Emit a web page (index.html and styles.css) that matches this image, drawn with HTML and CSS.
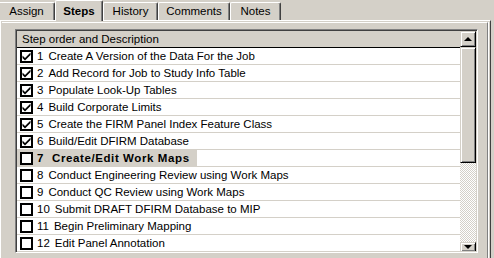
FILE: index.html
```html
<!DOCTYPE html>
<html lang="en">

<head>
    <meta charset="UTF-8" />
    <title>Job Steps</title>
    <link rel="stylesheet" href="styles.css">
</head>

<body>
    <div class="tabs">
        <div class="tab tab-assign">Assign</div>
        <div class="tab tab-steps active">Steps</div>
        <div class="tab tab-history">History</div>
        <div class="tab tab-comments">Comments</div>
        <div class="tab tab-notes">Notes</div>
    </div>

    <div class="panel">
        <div class="frame">
            <div class="list">
                <div class="grid">
                    <div class="grid-header">Step order and Description</div>
                    <div id="rows"></div>
                </div>
                <div class="scrollbar">
                    <div class="sb-btn sb-up"><span class="arrow-up"></span></div>
                    <div class="sb-thumb"></div>
                    <div class="sb-track"></div>
                    <div class="sb-btn sb-down"><span class="arrow-down"></span></div>
                </div>
            </div>
        </div>
    </div>

    <script>
        const steps = [
            { n: 1, text: "Create A Version of the Data For the Job", done: true },
            { n: 2, text: "Add Record for Job to Study Info Table", done: true },
            { n: 3, text: "Populate Look-Up Tables", done: true },
            { n: 4, text: "Build Corporate Limits", done: true },
            { n: 5, text: "Create the FIRM Panel Index Feature Class", done: true },
            { n: 6, text: "Build/Edit DFIRM Database", done: true },
            { n: 7, text: "Create/Edit Work Maps", done: false, current: true },
            { n: 8, text: "Conduct Engineering Review using Work Maps", done: false },
            { n: 9, text: "Conduct QC Review using Work Maps", done: false },
            { n: 10, text: "Submit DRAFT DFIRM Database to MIP", done: false },
            { n: 11, text: "Begin Preliminary Mapping", done: false },
            { n: 12, text: "Edit Panel Annotation", done: false }
        ];

        const checkSvg = '<svg width="9" height="9" viewBox="0 0 9 9"><path d="M0.5 3.5 L3 6 L8.5 0.5 L8.5 3 L3 8.5 L0.5 6 Z" fill="#000"/></svg>';

        const rows = document.getElementById("rows");
        steps.forEach((step) => {
            const row = document.createElement("div");
            row.className = "row";
            row.innerHTML = `
              <span class="cell${step.current ? " current" : ""}">
                <span class="check">${step.done ? checkSvg : ""}</span>
                <span class="num">${step.n}</span>
                <span class="desc">${step.text}</span>
              </span>`;
            rows.appendChild(row);
        });
    </script>
</body>

</html>
```

FILE: styles.css
```css
html,
body {
    margin: 0;
    width: 494px;
    height: 258px;
    overflow: hidden;
    background-color: #d4d0c8;
    font-family: "Liberation Sans", Arial, sans-serif;
    font-size: 11px;
    color: #000;
}

/* tab strip */
.tabs {
    display: flex;
    height: 20px;
    align-items: flex-end;
    margin-left: -2px;
}

.tab {
    height: 18px;
    line-height: 16px;
    border-top: 1px solid #fff;
    border-left: 1px solid #fff;
    border-right: 1px solid #404040;
    box-shadow: inset -1px 0 0 #808080;
    border-radius: 2px 2px 0 0;
    text-align: center;
    box-sizing: border-box;
    font-size: 11.5px;
}

.tab-assign { width: 57px; }
.tab-steps { width: 48px; }
.tab-history { width: 55px; }
.tab-comments { width: 72px; }
.tab-notes { width: 51px; }

.tab.active {
    height: 21px;
    margin-bottom: -1px;
    position: relative;
    z-index: 1;
    font-weight: bold;
    line-height: 21px;
    background-color: #d4d0c8;
}

/* panel under the tabs */
.panel {
    height: 238px;
    border-top: 1px solid #fff;
    border-left: 1px solid #fff;
    border-right: 1px solid #404040;
    width: 491px;
    box-sizing: border-box;
    padding: 1px 2px 0 1px;
}

.frame {
    height: 100%;
    border-top: 1px solid #fff;
    border-right: 1px solid #808080;
    box-shadow: 1px 0 0 #fff;
    box-sizing: border-box;
    padding: 6px 8px 0 13px;
}

/* list box */
.list {
    display: flex;
    width: 463px;
    height: 224px;
    box-sizing: border-box;
    border-top: 1px solid #808080;
    border-left: 1px solid #808080;
    border-right: 1px solid #fff;
    border-bottom: 1px solid #fff;
    box-shadow: inset 1px 1px 0 #404040, inset -1px -1px 0 #d4d0c8;
    padding: 1px;
}

.grid {
    flex: 1;
    background-color: #fff;
    overflow: hidden;
    font-size: 11.5px;
}

.grid-header {
    height: 16px;
    line-height: 16px;
    padding-left: 5px;
    background-color: #d4d0c8;
    border-bottom: 1px solid #000;
}

.row {
    height: 17px;
    border-bottom: 1px solid #d4d0c8;
    box-sizing: border-box;
    display: flex;
    align-items: center;
}

.cell {
    display: flex;
    align-items: center;
    height: 16px;
    padding-left: 3px;
    padding-right: 7px;
}

.cell.current {
    background-color: #d4d0c8;
    font-weight: bold;
    letter-spacing: 0.6px;
}

.check {
    width: 13px;
    height: 13px;
    box-sizing: border-box;
    border: 2px solid #000;
    background-color: #fff;
    display: flex;
    align-items: center;
    justify-content: center;
}

.check svg {
    display: block;
}

.num {
    margin-left: 4px;
}

.desc {
    margin-left: 5px;
}

.current .desc {
    margin-left: 8px;
}

/* scrollbar */
.scrollbar {
    width: 16px;
    display: flex;
    flex-direction: column;
}

.sb-btn,
.sb-thumb {
    background-color: #d4d0c8;
    box-sizing: border-box;
    border-top: 1px solid #d4d0c8;
    border-left: 1px solid #d4d0c8;
    border-right: 1px solid #000;
    border-bottom: 1px solid #000;
    box-shadow: inset 1px 1px 0 #fff, inset -1px -1px 0 #808080;
    display: flex;
    align-items: center;
    justify-content: center;
}

.sb-up {
    height: 16px;
}

.sb-thumb {
    height: 116px;
}

.sb-track {
    flex: 1;
    background-color: #fff;
    background-image: repeating-conic-gradient(#d4d0c8 0 25%, #fff 0 50%);
    background-size: 2px 2px;
}

.sb-down {
    height: 9px;
    border-bottom: none;
    align-items: flex-start;
    padding-top: 2px;
}

.arrow-up {
    width: 0;
    height: 0;
    border-left: 4px solid transparent;
    border-right: 4px solid transparent;
    border-bottom: 4px solid #000;
}

.arrow-down {
    width: 0;
    height: 0;
    border-left: 4px solid transparent;
    border-right: 4px solid transparent;
    border-top: 4px solid #000;
}
```
